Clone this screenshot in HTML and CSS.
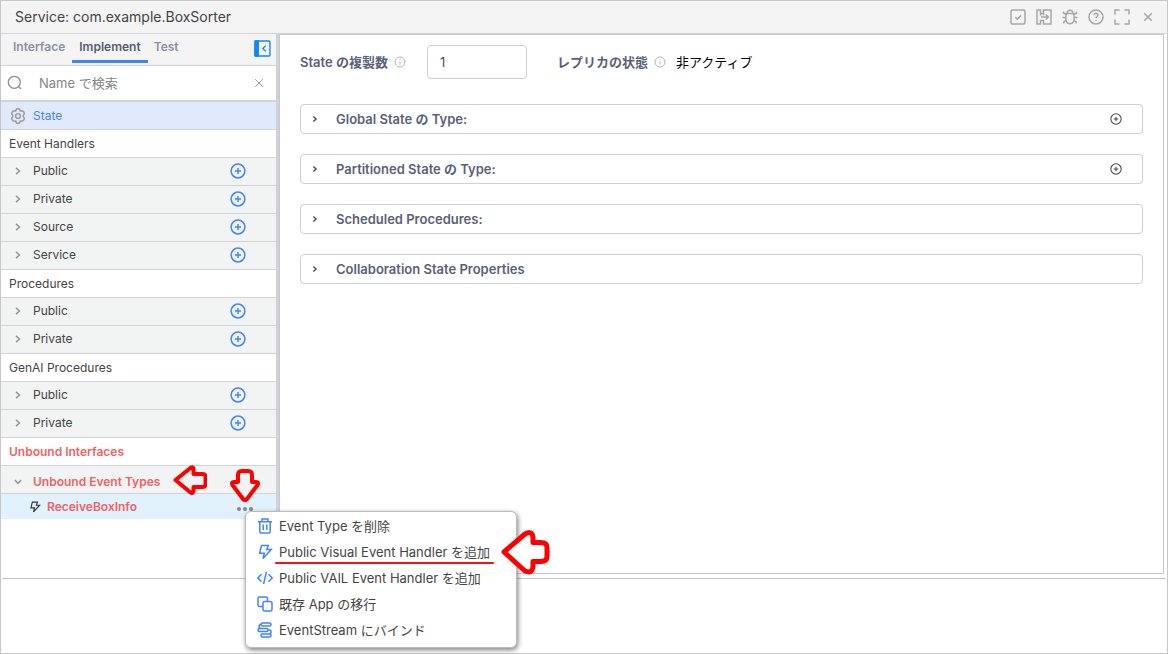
FILE: index.html
```html
<!DOCTYPE html>
<html lang="ja">
<head>
<meta charset="utf-8">
<title>Service: com.example.BoxSorter</title>
<link rel="stylesheet" href="styles.css">
</head>
<body>
<svg class="defs" aria-hidden="true">
  <symbol id="plus" viewBox="0 0 16 16"><circle cx="8" cy="8" r="6.9"/><path d="M8 5v6M5 8h6"/></symbol>
  <symbol id="info" viewBox="0 0 12 12"><circle cx="6" cy="6" r="5"/><path d="M6 5.300v3.300M6 3.200v1"/></symbol>
  <symbol id="chev" viewBox="0 0 10 10"><path d="M3 1.800 6.400 5 3 8.200"/></symbol>
  <symbol id="bolt" viewBox="0 0 16 16"><path d="M4.500 1.500h6.800L9.800 5.600h4.400L6 14.600l1.300-5.400H2.600z"/></symbol>
  <symbol id="close" viewBox="0 0 16 16"><path d="m4.200 4.200 7.600 7.600M11.800 4.200l-7.600 7.600"/></symbol>
</svg>
<div class="app">
  <header class="titlebar">
    <h1 class="title">Service: com.example.BoxSorter</h1>
    <div class="tools">
      <button class="tool" aria-label="Validate"><svg viewBox="0 0 16 16"><rect x="1" y="1" width="14" height="14" rx="1.500"/><path d="m5.300 8.200 2 1.900 3.600-3.700"/></svg></button>
      <button class="tool" aria-label="Export"><svg viewBox="0 0 16 16"><path d="M4.500 11.500V15H1V1h3.500v3.500h3V1H15v14H7.500v-3.500zM4.500 4.500v2M7.500 4.500v2M5 8h7M9.800 5.500 12.300 8l-2.500 2.500"/></svg></button>
      <button class="tool" aria-label="Debug"><svg viewBox="0 0 16 16"><path d="M5 4.500C5.300.3 10.700.3 11 4.500M4.500 4.500h7C13 8.500 12.600 14.700 8 14.700S3 8.500 4.500 4.500zM4 5.500 1.500 4V2.500M3.500 8.500H.5M4 11.500 1.800 13v1.500M12 5.500 14.500 4V2.500M12.500 8.500h3M12 11.500l2.200 1.500v1.500"/></svg></button>
      <button class="tool" aria-label="Help"><svg viewBox="0 0 16 16"><circle cx="8" cy="8" r="7"/><path d="M6 6.300C6 3.500 10.100 3.800 10 6.300 9.900 7.700 8 7.700 8 9.200M8 10.700v1.300"/></svg></button>
      <button class="tool" aria-label="Full screen"><svg viewBox="0 0 16 16"><path d="M1 5.500V1h4.500M10.500 1H15v4.500M15 10.500V15h-4.500M5.500 15H1v-4.500"/></svg></button>
      <button class="tool" aria-label="Close"><svg><use href="#close"/></svg></button>
    </div>
  </header>
  <div class="workspace">
    <aside class="sidebar">
      <nav class="tabs">
        <button class="tab">Interface</button>
        <button class="tab active">Implement</button>
        <button class="tab">Test</button>
        <button class="collapse" aria-label="Collapse"><svg viewBox="0 0 16 16"><rect x="1" y="1" width="14" height="14" rx="1"/><path class="fill" d="M1 1h3v14H1z"/><path d="M11 5.300 8.400 8l2.600 2.700"/></svg></button>
      </nav>
      <div class="search">
        <svg class="search-icon" viewBox="0 0 16 16"><circle cx="7.300" cy="7.300" r="6"/><path d="m11.600 11.600 2.400 2.400"/></svg>
        <input class="search-box" type="text" placeholder="Name で検索" aria-label="Name で検索">
        <button class="clear" aria-label="Clear"><svg><use href="#close"/></svg></button>
      </div>
      <div class="row state">
        <svg class="gear" viewBox="0 0 16 16"><path d="M6.300 1.200Q8 .2 9.700 1.200L10.300 3l2.200-.1Q14.200 3.800 14.400 5.700L13.200 7.200v1.600l1.200 1.500q-.2 1.900-1.900 2.800L10.300 13l-.6 1.800Q8 15.800 6.300 14.800L5.700 13l-2.200.1Q1.800 12.200 1.600 10.300L2.800 8.800V7.200L1.600 5.700Q1.800 3.800 3.500 2.900L5.700 3z"/><circle cx="8" cy="8" r="2.400"/></svg>
        <a class="label" href="#">State</a>
      </div>
      <h2 class="group">Event Handlers</h2>
      <div class="row"><svg class="chev"><use href="#chev"/></svg><span class="label">Public</span><button class="add" aria-label="Add public event handler"><svg><use href="#plus"/></svg></button></div>
      <div class="row"><svg class="chev"><use href="#chev"/></svg><span class="label">Private</span><button class="add" aria-label="Add private event handler"><svg><use href="#plus"/></svg></button></div>
      <div class="row"><svg class="chev"><use href="#chev"/></svg><span class="label">Source</span><button class="add" aria-label="Add source event handler"><svg><use href="#plus"/></svg></button></div>
      <div class="row"><svg class="chev"><use href="#chev"/></svg><span class="label">Service</span><button class="add" aria-label="Add service event handler"><svg><use href="#plus"/></svg></button></div>
      <h2 class="group">Procedures</h2>
      <div class="row"><svg class="chev"><use href="#chev"/></svg><span class="label">Public</span><button class="add" aria-label="Add public procedure"><svg><use href="#plus"/></svg></button></div>
      <div class="row"><svg class="chev"><use href="#chev"/></svg><span class="label">Private</span><button class="add" aria-label="Add private procedure"><svg><use href="#plus"/></svg></button></div>
      <h2 class="group">GenAI Procedures</h2>
      <div class="row"><svg class="chev"><use href="#chev"/></svg><span class="label">Public</span><button class="add" aria-label="Add public GenAI procedure"><svg><use href="#plus"/></svg></button></div>
      <div class="row"><svg class="chev"><use href="#chev"/></svg><span class="label">Private</span><button class="add" aria-label="Add private GenAI procedure"><svg><use href="#plus"/></svg></button></div>
      <h2 class="group unbound">Unbound Interfaces</h2>
      <div class="row unbound types">
        <svg class="chev open"><use href="#chev"/></svg><span class="label">Unbound Event Types</span>
        <svg class="arrow arrow-types" viewBox="0 0 34 30"><path d="M2.500 15 18 2.500q2-1 2.500 1V9h9q3 0 3 3v7q0 3-3 3h-9v4q-.5 3-3 1.500z"/></svg>
      </div>
      <div class="item unbound">
        <svg class="item-bolt"><use href="#bolt"/></svg>
        <a class="label" href="#">ReceiveBoxInfo</a>
        <button class="more" aria-label="More"><svg viewBox="0 0 16 4"><circle cx="2" cy="2" r="2"/><circle cx="8" cy="2" r="2"/><circle cx="14" cy="2" r="2"/></svg></button>
        <svg class="arrow arrow-more" viewBox="0 0 30 34"><path d="M8 13V6q0-4 4-4h6q4 0 4 4v7h4q3 0 1.500 3L17 30q-2 2-4 0L2.500 16q-1.500-3 1.500-3z"/></svg>
        <menu class="menu">
          <li><button class="menu-item"><svg viewBox="0 0 16 16"><path d="M1 3.800h14M5 3.800V1h6v2.800M2.800 3.800v10q0 1.200 1.200 1.200h8q1.200 0 1.200-1.200v-10M6.200 6.500v5.500M9.800 6.500v5.500"/></svg>Event Type を削除</button></li>
          <li class="marked"><button class="menu-item"><svg><use href="#bolt"/></svg><span class="underlined">Public Visual Event Handler を追加</span></button>
            <svg class="arrow arrow-menu" viewBox="0 0 50 46"><path d="M4 23 25 5q7-4 8 3v5.500h8q6 0 6 5v9q0 5-6 5h-8V38q-1 7-8 4z"/></svg></li>
          <li><button class="menu-item"><svg viewBox="0 0 16 16"><path d="M4.500 4.200.8 8l3.700 3.800M11.500 4.200 15.200 8l-3.700 3.800M9.400 2 6.600 14"/></svg>Public VAIL Event Handler を追加</button></li>
          <li><button class="menu-item"><svg viewBox="0 0 16 16"><rect x="6" y="5.500" width="9" height="9.500" rx="1.500"/><path d="M6 10.500H2.500Q1 10.500 1 9V2.500Q1 1 2.500 1H9q1.500 0 1.500 1.500v3"/></svg>既存 App の移行</button></li>
          <li><button class="menu-item"><svg viewBox="0 0 16 16"><rect x="4" y="1" width="10" height="3" rx="1.500"/><rect x="1" y="6.500" width="10" height="3" rx="1.500"/><rect x="4" y="12" width="10" height="3" rx="1.500"/><path d="M4 2.500Q2 2.500 2 4.500t2 2M11 8h1.500Q14 8 14 10t-2 2"/></svg>EventStream にバインド</button></li>
        </menu>
      </div>
    </aside>
    <main class="panel">
      <div class="fields">
        <label class="field-label" for="replicas">State の複製数</label>
        <svg class="info"><use href="#info"/></svg>
        <input class="replicas" id="replicas" type="text" value="1">
        <span class="field-label">レプリカの状態</span>
        <svg class="info"><use href="#info"/></svg>
        <span class="status">非アクティブ</span>
      </div>
      <section class="card"><svg class="card-chev"><use href="#chev"/></svg><h3 class="card-title">Global State の Type:</h3><button class="card-add" aria-label="Add global type"><svg><use href="#plus"/></svg></button></section>
      <section class="card"><svg class="card-chev"><use href="#chev"/></svg><h3 class="card-title">Partitioned State の Type:</h3><button class="card-add" aria-label="Add partitioned type"><svg><use href="#plus"/></svg></button></section>
      <section class="card"><svg class="card-chev"><use href="#chev"/></svg><h3 class="card-title">Scheduled Procedures:</h3></section>
      <section class="card"><svg class="card-chev"><use href="#chev"/></svg><h3 class="card-title">Collaboration State Properties</h3></section>
    </main>
  </div>
  <footer class="footer"></footer>
</div>
</body>
</html>
```

FILE: styles.css
```css
* { box-sizing: border-box; }
body {
  margin: 0;
  font: 13px/20px Inter, "Noto Sans CJK JP", sans-serif;
  color: #444;
  background: #fff;
}
h1, h2, h3, menu { margin: 0; padding: 0; font: inherit; }
button {
  display: flex;
  padding: 0;
  border: 0;
  background: none;
  font: inherit;
  color: inherit;
}
a { color: inherit; text-decoration: none; }
svg { fill: none; stroke: currentColor; flex: none; }
.defs { position: absolute; width: 0; height: 0; }

.app {
  display: flex;
  flex-direction: column;
  min-height: 100vh;
  border: 1px solid #c8c8c8;
}
.titlebar {
  display: flex;
  align-items: center;
  justify-content: space-between;
  height: 33px;
  padding: 0 11px 0 14px;
  background: #f4f4f4;
  border-bottom: 1px solid #d2d4d6;
}
.title { font-size: 14px; }
.tools { display: flex; gap: 10px; color: #a6a6a6; }
.tool svg { width: 16px; height: 16px; stroke-width: 1.5; }

.workspace { display: flex; flex: 1; padding: 0 3px 4px 0; }
.sidebar { width: 278px; border-right: 3px solid #ced2da; font-size: 12px; }
.tabs {
  display: flex;
  height: 32px;
  padding: 0 5px 2px 6px;
  background: #f4f4f4;
  border-bottom: 1px solid #d0d4d8;
}
.tab {
  height: 29px;
  padding: 3px 7px 0 6px;
  border-bottom: 3px solid transparent;
  font-weight: 600;
  color: #8d91a0;
}
.tab.active { color: #555a74; border-color: #4285f4; }
.tab.active { padding-left: 7px; }
.collapse { margin: 6px 0 0 auto; color: #0f86ff; }
.collapse svg { width: 17px; height: 17px; stroke-width: 1.3; }
.collapse .fill { fill: currentColor; }

.search {
  display: flex;
  align-items: center;
  height: 36px;
  padding: 0 9px 0 6px;
  border-bottom: 2px solid #ced4d8;
}
.search-icon { width: 16px; height: 16px; color: #8f8f8f; stroke-width: 1.3; }
.search-box {
  flex: 1;
  min-width: 0;
  padding: 0 0 0 16px;
  border: 0;
  outline: 0;
  background: none;
  font: inherit;
  font-size: 13px;
}
.search-box::placeholder { color: #858585; opacity: 1; }
.clear { color: #999; }
.clear svg { width: 16px; height: 16px; }

.row, .group {
  position: relative;
  display: flex;
  align-items: center;
  height: 28px;
  border-bottom: 1px solid #d0d4d8;
}
.row { padding: 0 30px 2px 12px; background: #f2f4f4; }
.group { padding-left: 8px; }
.chev { width: 10px; height: 10px; margin-right: 10px; color: #999; stroke-width: 1.6; }
.chev.open { transform: rotate(90deg); }
.add { margin-left: auto; color: #4285f4; }
.add svg { width: 16px; height: 16px; stroke-width: 1.5; }
.state { padding: 0 9px; background: #e1eafc; color: #4c83ee; }
.gear { width: 16px; height: 16px; margin-right: 7px; color: #999; stroke-width: 1.4; }
.unbound { color: #ee6363; font-weight: 600; }
.types { padding-top: 4px; padding-bottom: 0; }

.item {
  position: relative;
  display: flex;
  align-items: center;
  height: 25px;
  padding: 0 23px 0 28px;
  background: #e2f2fd;
}
.item-bolt { width: 12px; height: 12px; margin-right: 6px; color: #333; stroke-width: 1.5; }
.more { margin: 4px 0 0 auto; color: #7d879a; }
.more svg { width: 16px; height: 4px; fill: currentColor; stroke: none; }

.menu {
  position: absolute;
  z-index: 1;
  left: 244px;
  top: 17px;
  width: 272px;
  padding: 1px 0 4px;
  list-style: none;
  background: #fff;
  border: 1px solid #bbb;
  border-radius: 6px;
  box-shadow: 1px 2px 5px rgba(0, 0, 0, .5);
  color: #444;
  font-size: 13px;
  font-weight: 400;
}
.menu-item {
  align-items: center;
  gap: 6px;
  width: 100%;
  height: 26px;
  padding-left: 11px;
  white-space: nowrap;
}
.menu-item svg { width: 16px; height: 16px; color: #4285f4; stroke-width: 1.5; }
.marked { position: relative; }
.underlined { position: relative; }
.underlined::after {
  content: "";
  position: absolute;
  left: -4px;
  right: -4px;
  bottom: -2px;
  height: 2px;
  border-radius: 1px;
  background: #fa1111;
}

.arrow {
  position: absolute;
  z-index: 2;
  fill: #fff;
  stroke: #f00;
  stroke-width: 4;
  stroke-linejoin: round;
}
.arrow-types { left: 172px; top: -1px; width: 34px; height: 30px; fill: #f2f4f4; }
.arrow-more { left: 229px; top: -25px; width: 30px; height: 34px; fill: #f2f4f4; }
.arrow-menu { left: 254px; top: -10px; width: 50px; height: 46px; stroke-width: 5; }

.panel {
  flex: 1;
  min-width: 0;
  padding: 10px 20px;
  border: 1px solid #c8c8c8;
}
.fields { display: flex; align-items: center; height: 34px; margin-bottom: 25px; }
.field-label { font-weight: 600; color: #5b5f77; }
.info { width: 12px; height: 12px; margin: 0 10px 0 6px; color: #b5b5b5; stroke-width: 1; }
.replicas {
  width: 100px;
  height: 34px;
  margin: 0 30px 0 11px;
  padding: 0 12px;
  border: 1px solid #cdcfd9;
  border-radius: 4px;
  font: inherit;
  color: #555;
}
.status { color: #000; }
.card {
  display: flex;
  align-items: center;
  height: 30px;
  margin-bottom: 20px;
  padding: 0 20px 0 10px;
  border: 1px solid #cdcfd9;
  border-radius: 4px;
}
.card-chev { width: 8px; height: 8px; margin-right: 17px; color: #444; stroke-width: 1.6; }
.card-title { font-weight: 600; color: #5b5f77; }
.card-add { margin-left: auto; color: #444; }
.card-add svg { width: 12px; height: 12px; stroke-width: 1.4; }
.footer { height: 75px; margin: 0 1px; border-top: 1px solid #c8c8c8; }
```
